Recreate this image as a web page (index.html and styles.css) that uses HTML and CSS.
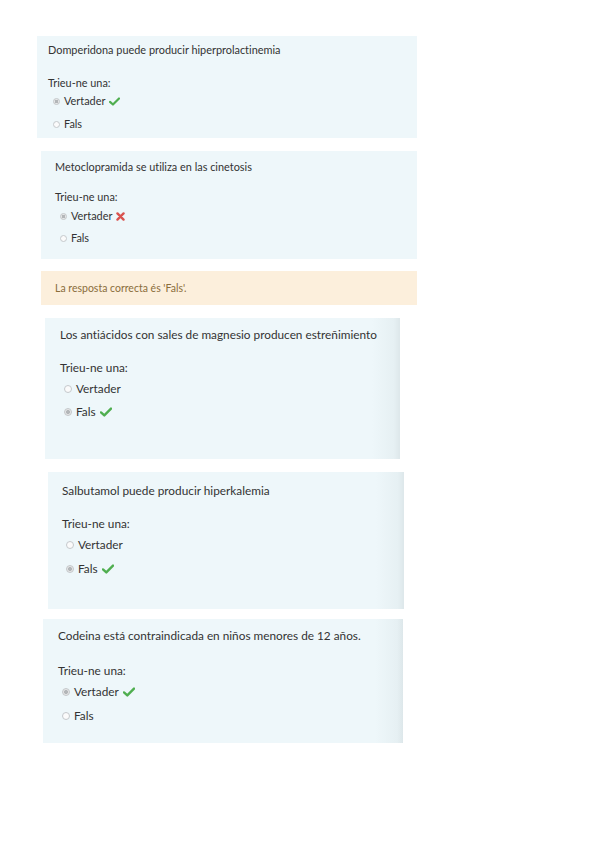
FILE: index.html
```html
<!DOCTYPE html>
<html lang="es">
<head>
<meta charset="utf-8">
<title>Qüestionari</title>
<link rel="stylesheet" href="styles.css">
</head>
<body>
<div class="page">
  <div class="que b1">
    <div class="qtext">Domperidona puede producir hiperprolactinemia</div>
    <div class="prompt">Trieu-ne una:</div>
    <div class="opt first"><span class="radio checked"></span><span>Vertader</span><svg class="ico" viewBox="0 0 12 10" width="11" height="9"><path d="M1 5.4 L4.3 8.4 L11 1.6" fill="none" stroke="#4fae4f" stroke-width="2.4" stroke-linecap="round" stroke-linejoin="round"/></svg></div>
    <div class="opt"><span class="radio"></span><span>Fals</span></div>
  </div>

  <div class="que b2">
    <div class="qtext">Metoclopramida se utiliza en las cinetosis</div>
    <div class="prompt">Trieu-ne una:</div>
    <div class="opt first"><span class="radio checked"></span><span>Vertader</span><svg class="ico" viewBox="0 0 10 10" width="9" height="9"><path d="M1.6 1.6 L8.4 8.4 M8.4 1.6 L1.6 8.4" fill="none" stroke="#d9534f" stroke-width="2.6" stroke-linecap="round"/></svg></div>
    <div class="opt"><span class="radio"></span><span>Fals</span></div>
  </div>

  <div class="feedback">La resposta correcta és 'Fals'.</div>

  <div class="que b3 shade">
    <div class="qtext">Los antiácidos con sales de magnesio producen estreñimiento</div>
    <div class="prompt">Trieu-ne una:</div>
    <div class="opt first"><span class="radio"></span><span>Vertader</span></div>
    <div class="opt"><span class="radio checked"></span><span>Fals</span><svg class="ico" viewBox="0 0 12 10" width="12" height="10"><path d="M1 5.4 L4.3 8.4 L11 1.6" fill="none" stroke="#4fae4f" stroke-width="2.4" stroke-linecap="round" stroke-linejoin="round"/></svg></div>
  </div>

  <div class="que b4 shade">
    <div class="qtext">Salbutamol puede producir hiperkalemia</div>
    <div class="prompt">Trieu-ne una:</div>
    <div class="opt first"><span class="radio"></span><span>Vertader</span></div>
    <div class="opt"><span class="radio checked"></span><span>Fals</span><svg class="ico" viewBox="0 0 12 10" width="12" height="10"><path d="M1 5.4 L4.3 8.4 L11 1.6" fill="none" stroke="#4fae4f" stroke-width="2.4" stroke-linecap="round" stroke-linejoin="round"/></svg></div>
  </div>

  <div class="que b5 shade">
    <div class="qtext">Codeina está contraindicada en niños menores de 12 años.</div>
    <div class="prompt">Trieu-ne una:</div>
    <div class="opt first"><span class="radio checked"></span><span>Vertader</span><svg class="ico" viewBox="0 0 12 10" width="12" height="10"><path d="M1 5.4 L4.3 8.4 L11 1.6" fill="none" stroke="#4fae4f" stroke-width="2.4" stroke-linecap="round" stroke-linejoin="round"/></svg></div>
    <div class="opt"><span class="radio"></span><span>Fals</span></div>
  </div>
</div>
</body>
</html>
```
FILE: styles.css
```css
html, body {
  margin: 0;
  padding: 0;
  background: #ffffff;
}
body {
  font-family: Lato, "Open Sans", "Liberation Sans", sans-serif;
  font-variant-ligatures: none;
  color: #333333;
}
.page {
  padding-top: 36px;
  display: flex;
  flex-direction: column;
  align-items: flex-start;
}
.que {
  box-sizing: border-box;
  background: #eef7fa;
  font-size: 10.9px;
  padding-top: var(--pt);
  padding-left: var(--pl);
  height: var(--h);
  width: var(--w);
  margin-left: var(--ml);
  margin-top: var(--mt);
}
.shade {
  background: linear-gradient(to right, #eef7fa calc(100% - 28px), #e6f0f3 calc(100% - 6px), #dde7ea);
}
.qtext {
  line-height: 20px;
  white-space: nowrap;
}
.prompt {
  line-height: 18px;
  margin-top: var(--g1);
}
.opt {
  line-height: 18px;
  display: flex;
  align-items: center;
  margin-top: var(--g3);
  padding-left: var(--rl);
}
.opt.first {
  margin-top: var(--g2);
}
.radio {
  box-sizing: border-box;
  width: var(--rs);
  height: var(--rs);
  border-radius: 50%;
  border: 1px solid #c5c9cc;
  background: #fbfbfb;
  margin-right: var(--rg);
  flex: none;
}
.radio.checked {
  background: radial-gradient(circle, #b3b6b8 0 45%, #e6e7e8 52% 100%);
  border-color: #c4c7c9;
}
.ico {
  margin-left: 4px;
  flex: none;
}
.b1 { --ml: 37px; --mt: 0px; --w: 380px; --h: 102px; --pt: 4px; --pl: 11px; --g1: 14px; --g2: 0px; --g3: 5px; --rl: 5px; --rs: 7px; --rg: 4px; }
.b2 { --ml: 41px; --mt: 13px; --w: 376px; --h: 108px; --pt: 6px; --pl: 14px; --g1: 11px; --g2: 1px; --g3: 4px; --rl: 5px; --rs: 7px; --rg: 4px; }
.b3 { --ml: 45px; --mt: 13px; --w: 355px; --h: 141px; --pt: 7px; --pl: 15px; --g1: 14px; --g2: 3px; --g3: 5px; --rl: 4px; --rs: 8px; --rg: 4px; font-size: 11.8px; }
.b4 { --ml: 48px; --mt: 13px; --w: 356px; --h: 137px; --pt: 9px; --pl: 14px; --g1: 14px; --g2: 3px; --g3: 6px; --rl: 4px; --rs: 8px; --rg: 4px; font-size: 11.8px; }
.b5 { --ml: 43px; --mt: 10px; --w: 360px; --h: 124px; --pt: 7px; --pl: 15px; --g1: 16px; --g2: 3px; --g3: 6px; --rl: 4px; --rs: 8px; --rg: 4px; font-size: 11.8px; }
.feedback {
  box-sizing: border-box;
  margin-left: 41px;
  margin-top: 12px;
  width: 376px;
  height: 34px;
  background: #fcefdc;
  color: #8a6d3b;
  font-size: 10.5px;
  line-height: 34px;
  padding-left: 14px;
}
```
